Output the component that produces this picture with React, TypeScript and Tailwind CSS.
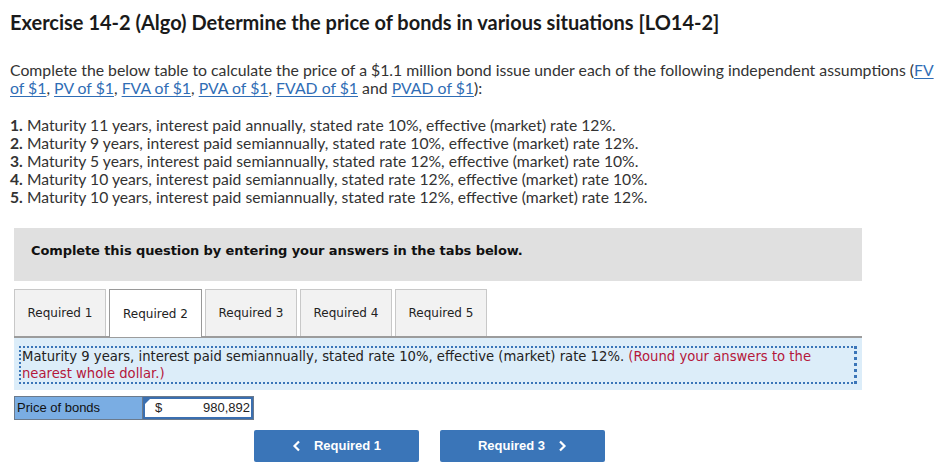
import React from "react";

const links = ["PV of $1", "FVA of $1", "PVA of $1"];

const cases = [
  "Maturity 11 years, interest paid annually, stated rate 10%, effective (market) rate 12%.",
  "Maturity 9 years, interest paid semiannually, stated rate 10%, effective (market) rate 12%.",
  "Maturity 5 years, interest paid semiannually, stated rate 12%, effective (market) rate 10%.",
  "Maturity 10 years, interest paid semiannually, stated rate 12%, effective (market) rate 10%.",
  "Maturity 10 years, interest paid semiannually, stated rate 12%, effective (market) rate 12%.",
];

const tabs = ["Required 1", "Required 2", "Required 3", "Required 4", "Required 5"];

function A({ children }: { children: React.ReactNode }) {
  return <a className="text-[#2f6db5] underline decoration-1 underline-offset-2 cursor-pointer">{children}</a>;
}

export default function App() {
  return (
    <div className="w-[948px] h-[470px] overflow-hidden bg-white text-[#222]">
      <div className="px-[10px] pt-[9px] font-['Lato','Open_Sans',sans-serif]">
        <h1 className="text-[20px] font-bold leading-[26px] text-[#1a1a1a]">
          Exercise 14-2 (Algo) Determine the price of bonds in various situations [LO14-2]
        </h1>

        <p className="mt-[26px] text-[15.8px] leading-[18px] text-[#333]">
          Complete the below table to calculate the price of a $1.1 million bond issue under each of the following independent assumptions (<A>FV
          <br />of $1</A>,{" "}
          {links.map((l) => (
            <React.Fragment key={l}>
              <A>{l}</A>,{" "}
            </React.Fragment>
          ))}
          <A>FVAD of $1</A> and <A>PVAD of $1</A>):
        </p>

        <ol className="mt-[19px] text-[15.7px] leading-[18px] text-[#333]">
          {cases.map((c, i) => (
            <li key={i}>
              <span className="font-bold">{i + 1}.</span> {c}
            </li>
          ))}
        </ol>
      </div>

      <div className="ml-[14px] w-[848px] mt-[22px] font-['DejaVu_Sans',sans-serif]">
        <div className="h-[53px] bg-[#e0e0e0] flex items-start pt-[13px] pl-[17px]">
          <span className="text-[13px] font-bold text-[#111] tracking-[-0.1px]">
            Complete this question by entering your answers in the tabs below.
          </span>
        </div>

        <div className="mt-[8px] flex gap-[3px] border-b-2 border-[#9c9c9c]">
          {tabs.map((t, i) => (
            <div
              key={t}
              className={
                i === 1
                  ? "w-[93px] h-[48px] -mb-[2px] flex items-center justify-center bg-white border border-b-0 border-[#999] text-[12px] text-[#222]"
                  : "w-[92px] h-[47px] flex items-center justify-center bg-[#f2f2f2] border border-b-0 border-[#c8c8c8] text-[12px] text-[#222]"
              }
            >
              {t}
            </div>
          ))}
        </div>

        <div className="h-[52px] bg-[#dcedf9] px-[5px] pt-[8px]">
          <div className="border-2 border-dotted border-[#3a75b8] border-r-[3px] text-[13.2px] leading-[17px] text-[#222] pl-[1px]">
            Maturity 9 years, interest paid semiannually, stated rate 10%, effective (market) rate 12%.{" "}
            <span className="text-[#b5173b]">(Round your answers to the nearest whole dollar.)</span>
          </div>
        </div>

        <div className="mt-[6px] flex h-[24px] w-[240px] border border-[#6b7a8c] font-['Liberation_Sans',sans-serif] text-[13px]">
          <div className="w-[128px] bg-[#7aade3] pl-[2px] flex items-center text-[#111] border-r border-[#6b7a8c]">
            Price of bonds
          </div>
          <div className="relative flex-1 bg-white border-2 border-[#3b6fb0] flex items-center justify-between pl-[10px] pr-[1px] text-[#222]">
            <span className="absolute left-0 top-0 w-0 h-0 border-t-[5px] border-r-[5px] border-t-[#3b6fb0] border-r-transparent" />
            <span>$</span>
            <span>980,892</span>
          </div>
        </div>

        <div className="mt-[10px] flex gap-[21px] pl-[240px] font-['Liberation_Sans',sans-serif] text-[13px] font-bold text-white">
          <button className="w-[165px] h-[32px] rounded-[2px] bg-[#3a75b8] flex items-center justify-center gap-[13px]">
            <svg width="9" height="12" viewBox="0 0 9 12"><path d="M7 1.5 2.5 6 7 10.5" fill="none" stroke="white" strokeWidth="2.2" /></svg>
            <span>Required 1</span>
          </button>
          <button className="w-[165px] h-[32px] rounded-[2px] bg-[#3a75b8] flex items-center justify-center gap-[13px]">
            <span>Required 3</span>
            <svg width="9" height="12" viewBox="0 0 9 12"><path d="M2 1.5 6.5 6 2 10.5" fill="none" stroke="white" strokeWidth="2.2" /></svg>
          </button>
        </div>
      </div>
    </div>
  );
}
